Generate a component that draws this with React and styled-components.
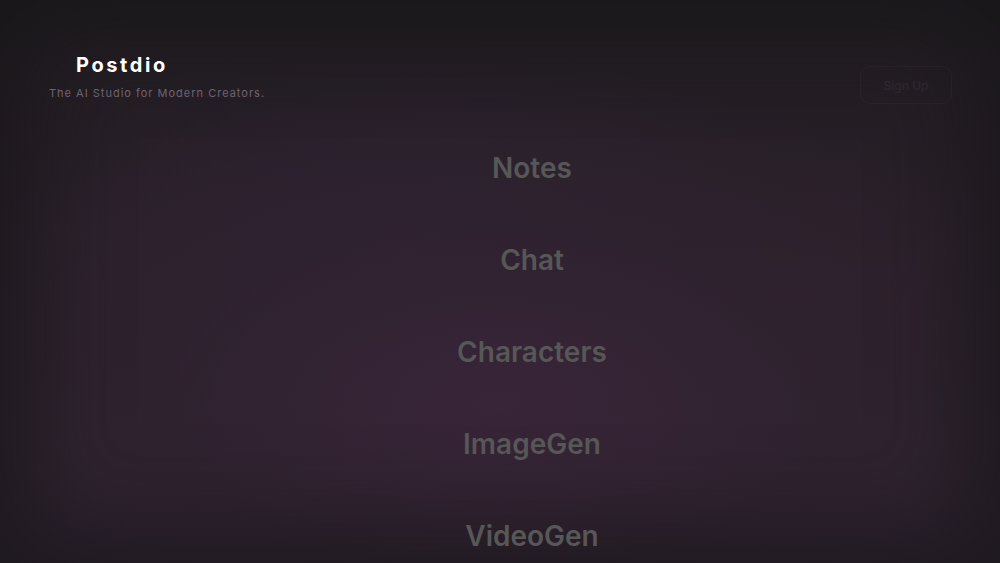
import React from 'react';
import styled, { createGlobalStyle } from 'styled-components';

const GlobalStyle = createGlobalStyle`
  html, body, #root {
    margin: 0;
    height: 100%;
  }

  body {
    font-family: 'Inter', 'Noto Sans', sans-serif;
    background: #1f1c20;
    overflow: hidden;
  }
`;

const Page = styled.div`
  position: relative;
  display: flex;
  flex-direction: column;
  width: 100%;
  height: 100vh;
  overflow: hidden;
  background:
    radial-gradient(ellipse 75% 70% at 50% 72%, rgba(58, 38, 58, 0.85) 0%, rgba(48, 34, 48, 0.65) 45%, rgba(31, 28, 32, 0) 85%),
    radial-gradient(ellipse 40% 35% at 40% 42%, rgba(48, 34, 58, 0.5) 0%, rgba(48, 34, 58, 0) 100%),
    linear-gradient(180deg, #201d21 0%, #2a2029 40%, #2f2431 100%);
  box-shadow: inset 0 0 90px 30px rgba(24, 22, 25, 0.75);
`;

const Header = styled.header`
  display: flex;
  justify-content: space-between;
  align-items: flex-start;
  padding: 52px 48px 0 49px;
`;

const Brand = styled.div`
  display: flex;
  flex-direction: column;
`;

const Logo = styled.h1`
  margin: 0 0 0 27px;
  font-size: 20px;
  font-weight: 700;
  letter-spacing: 2.6px;
  line-height: 26px;
  color: #ffffff;
`;

const Tagline = styled.p`
  margin: 8px 0 0;
  font-size: 11px;
  letter-spacing: 1px;
  color: #6d6470;
`;

const SignUp = styled.button`
  margin-top: 14px;
  padding: 0 18px;
  height: 38px;
  width: 92px;
  border-radius: 10px;
  border: 1px solid rgba(60, 48, 58, 0.3);
  background: transparent;
  font-family: inherit;
  font-size: 12px;
  font-weight: 500;
  color: #302630;
  cursor: pointer;
`;

const Menu = styled.nav`
  display: flex;
  flex-direction: column;
  align-items: center;
  gap: 58px;
  padding: 47px 0 0 64px;
`;

const MenuItem = styled.a`
  font-size: 28px;
  font-weight: 600;
  line-height: 34px;
  color: #575757;
  text-decoration: none;
  cursor: pointer;
`;

const items = ['Notes', 'Chat', 'Characters', 'ImageGen', 'VideoGen'];

export default function App() {
  return (
    <>
      <GlobalStyle />
      <Page>
        <Header>
          <Brand>
            <Logo>Postdio</Logo>
            <Tagline>The AI Studio for Modern Creators.</Tagline>
          </Brand>
          <SignUp>Sign Up</SignUp>
        </Header>
        <Menu>
          {items.map((item) => (
            <MenuItem key={item}>{item}</MenuItem>
          ))}
        </Menu>
      </Page>
    </>
  );
}
